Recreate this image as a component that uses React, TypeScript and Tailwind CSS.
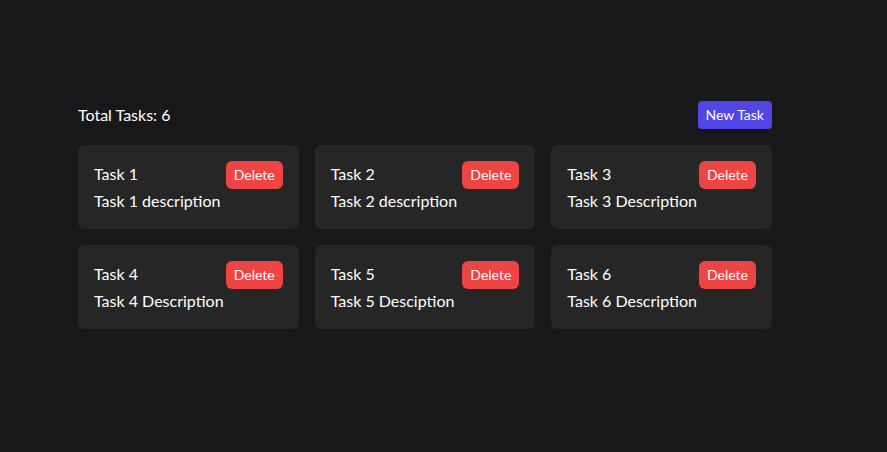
import React from "react";

const tasks = [
  { t: "Task 1", d: "Task 1 description" },
  { t: "Task 2", d: "Task 2 description" },
  { t: "Task 3", d: "Task 3 Description" },
  { t: "Task 4", d: "Task 4 Description" },
  { t: "Task 5", d: "Task 5 Desciption" },
  { t: "Task 6", d: "Task 6 Description" },
];

export default function App() {
  return (
    <div className="min-h-screen bg-[#18181b] text-white font-['Lato',sans-serif] pt-[101px] pl-[78px]">
      <div className="w-[694px]">
        <div className="flex items-center justify-between h-[28px]">
          <span className="text-base">Total Tasks: 6</span>
          <button className="bg-[#4f46e5] text-sm px-2 h-[28px] rounded-sm">New Task</button>
        </div>
        <div className="grid grid-cols-3 gap-4 mt-4">
          {tasks.map((x) => (
            <div key={x.t} className="bg-[#262626] rounded-md p-4">
              <div className="flex items-center justify-between">
                <span className="text-base -mt-[3px]">{x.t}</span>
                <button className="bg-[#ef4444] text-sm px-2 h-[28px] rounded-md">Delete</button>
              </div>
              <div className="text-base leading-6">{x.d}</div>
            </div>
          ))}
        </div>
      </div>
    </div>
  );
}
